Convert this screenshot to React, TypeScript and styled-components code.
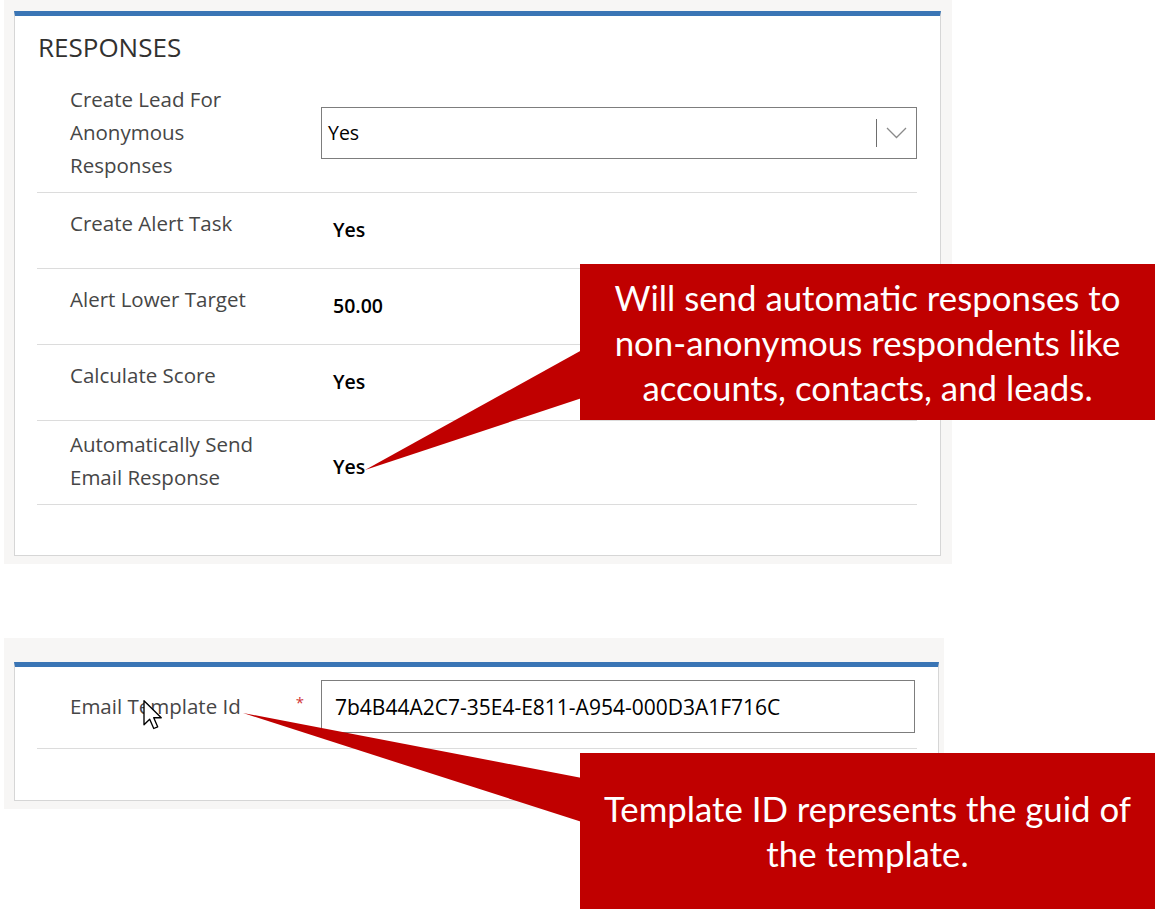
import React from 'react';
import styled, { createGlobalStyle } from 'styled-components';

const Global = createGlobalStyle`
  html, body { margin: 0; padding: 0; background: #ffffff; }
  body { font-family: "Open Sans", "Noto Sans", sans-serif; }
  * { box-sizing: border-box; }
`;

const Page = styled.div`
  position: relative;
  width: 1162px;
  height: 909px;
  overflow: hidden;
  padding-left: 4px;
  display: flex;
  flex-direction: column;
`;

const Backdrop = styled.section<{ $w: number; $mt: number; $pt: number; $pr: number }>`
  width: ${(p) => p.$w}px;
  margin-top: ${(p) => p.$mt}px;
  padding: ${(p) => p.$pt}px ${(p) => p.$pr}px 8px 10px;
  background: #f7f6f5;
`;

const Card = styled.div<{ $pr: number; $pb: number }>`
  background: #ffffff;
  border: 1px solid #d6d6d6;
  border-top: 5px solid #3a75b5;
  padding: 0 ${(p) => p.$pr}px ${(p) => p.$pb}px 22px;
`;

const Heading = styled.h2`
  margin: 15px 0 13px 1px;
  font-size: 26px;
  line-height: 32px;
  font-weight: 400;
  color: #323130;
`;

const Row = styled.div<{ $pt?: number; $pb?: number }>`
  display: grid;
  grid-template-columns: 251px 1fr;
  min-height: 76px;
  padding: ${(p) => p.$pt ?? 7}px 0 ${(p) => p.$pb ?? 10}px 33px;
  border-bottom: 1px solid #dcdcdc;
`;

const Label = styled.div<{ $mt?: number }>`
  margin-top: ${(p) => p.$mt ?? 0}px;
  font-size: 20.5px;
  line-height: 33px;
  color: #464646;
  white-space: nowrap;
`;

const LabelCell = styled.div`
  display: flex;
  align-items: center;
  justify-content: space-between;
  padding-right: 17px;
`;

const Required = styled.span`
  color: #d13438;
  font-size: 15px;
  line-height: 15px;
  margin-bottom: 8px;
`;

const Value = styled.div<{ $mt?: number }>`
  align-self: center;
  margin-top: ${(p) => p.$mt ?? 0}px;
  padding-left: 12px;
  font-size: 19.5px;
  font-weight: 600;
  color: #000000;
`;

const Select = styled.div`
  align-self: center;
  display: flex;
  align-items: center;
  height: 52px;
  border: 1px solid #7d7d7d;
  padding-left: 6px;
  font-size: 19.5px;
  color: #000000;
`;

const SelectText = styled.span`
  flex: 1;
`;

const SelectDivider = styled.span`
  width: 1px;
  height: 28px;
  background: #6e6e6e;
`;

const SelectButton = styled.span`
  width: 39px;
  display: flex;
  align-items: center;
  justify-content: center;
`;

const TextInput = styled.div`
  align-self: center;
  height: 53px;
  margin-right: 2px;
  display: flex;
  align-items: center;
  border: 1px solid #7d7d7d;
  padding-left: 13px;
  font-size: 21px;
  color: #000000;
  white-space: nowrap;
`;

const Callout = styled.div<{ $top: number; $h: number }>`
  position: absolute;
  left: 580px;
  top: ${(p) => p.$top}px;
  width: 575px;
  height: ${(p) => p.$h}px;
  background: #c00000;
  display: flex;
  align-items: center;
  justify-content: center;
  text-align: center;
  color: #ffffff;
  font-family: "Lato", "Open Sans", sans-serif;
  font-size: 34.8px;
  line-height: 45px;
  white-space: nowrap;
`;

const CalloutLine = styled.div``;

const Overlay = styled.svg`
  position: absolute;
  left: 0;
  top: 0;
  pointer-events: none;
`;

const Cursor = styled.svg`
  position: absolute;
  left: 143px;
  top: 700px;
  pointer-events: none;
`;

export default function App() {
  return (
    <Page>
      <Global />
      <Backdrop $w={948} $mt={0} $pt={11} $pr={11}>
        <Card $pr={23} $pb={50}>
          <Heading>RESPONSES</Heading>
          <Row>
            <Label>
              Create Lead For
              <br />
              Anonymous
              <br />
              Responses
            </Label>
            <Select>
              <SelectText>Yes</SelectText>
              <SelectDivider />
              <SelectButton>
                <svg width="21" height="12" viewBox="0 0 21 12">
                  <polyline points="1,1 10.5,10.5 20,1" fill="none" stroke="#8a8a8a" strokeWidth="1.3" />
                </svg>
              </SelectButton>
            </Select>
          </Row>
          <Row>
            <Label $mt={7}>Create Alert Task</Label>
            <Value>Yes</Value>
          </Row>
          <Row>
            <Label $mt={7}>Alert Lower Target</Label>
            <Value>50.00</Value>
          </Row>
          <Row>
            <Label $mt={7}>Calculate Score</Label>
            <Value>Yes</Value>
          </Row>
          <Row>
            <Label>
              Automatically Send
              <br />
              Email Response
            </Label>
            <Value $mt={10}>Yes</Value>
          </Row>
        </Card>
      </Backdrop>

      <Backdrop $w={940} $mt={74} $pt={24} $pr={5}>
        <Card $pr={21} $pb={51}>
          <Row $pt={13} $pb={15}>
            <LabelCell>
              <Label>Email Template Id</Label>
              <Required>*</Required>
            </LabelCell>
            <TextInput>7b4B44A2C7-35E4-E811-A954-000D3A1F716C</TextInput>
          </Row>
        </Card>
      </Backdrop>

      <Overlay width="1162" height="909" viewBox="0 0 1162 909">
        <polygon points="365,470 582,350 582,398" fill="#c00000" />
        <polygon points="243,713 582,778 582,822" fill="#c00000" />
      </Overlay>

      <Cursor width="20" height="30" viewBox="0 0 13 20">
        <path
          d="M0.5,0.5 L0.5,16.5 L4.3,12.8 L7,19 L9.6,17.9 L7,11.8 L12,11.8 Z"
          fill="#ffffff"
          stroke="#000000"
          strokeWidth="0.9"
          strokeLinejoin="round"
        />
      </Cursor>

      <Callout $top={264} $h={156}>
        <div>
          <CalloutLine>Will send automatic responses to</CalloutLine>
          <CalloutLine>non-anonymous respondents like</CalloutLine>
          <CalloutLine>accounts, contacts, and leads.</CalloutLine>
        </div>
      </Callout>

      <Callout $top={753} $h={156}>
        <div>
          <CalloutLine>Template ID represents the guid of</CalloutLine>
          <CalloutLine>the template.</CalloutLine>
        </div>
      </Callout>
    </Page>
  );
}
